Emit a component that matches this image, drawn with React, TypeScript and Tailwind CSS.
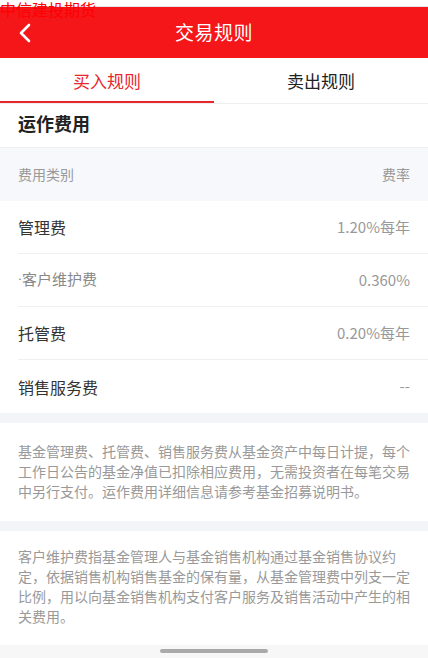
import React from 'react';

const rows = [
  { name: '管理费', rate: '1.20%每年', sub: false },
  { name: '客户维护费', rate: '0.360%', sub: true },
  { name: '托管费', rate: '0.20%每年', sub: false },
  { name: '销售服务费', rate: '--', sub: false },
];

const note1 = [
  '基金管理费、托管费、销售服务费从基金资产中每日计提，每个',
  '工作日公告的基金净值已扣除相应费用，无需投资者在每笔交易',
  '中另行支付。运作费用详细信息请参考基金招募说明书。',
];

const note2 = [
  '客户维护费指基金管理人与基金销售机构通过基金销售协议约',
  '定，依据销售机构销售基金的保有量，从基金管理费中列支一定',
  '比例，用以向基金销售机构支付客户服务及销售活动中产生的相',
  '关费用。',
];

export default function App() {
  return (
    <div className="relative w-[428px] h-[658px] overflow-hidden bg-white font-['Noto_Sans_CJK_SC',sans-serif]">
      {/* page title overlay */}
      <div className="absolute left-0 top-0 z-10 text-[16px] leading-[18px] text-[#ff0000] font-['Noto_Sans_CJK_SC',sans-serif]">
        中信建投期货
      </div>

      <div className="h-[7px] bg-white border-b border-[#e5e5e5]" />

      {/* header */}
      <div className="relative h-[51px] bg-[#f5161a] flex items-center justify-center">
        <svg className="absolute left-[18px] top-[16px]" width="14" height="20" viewBox="0 0 14 20">
          <path d="M11 2 L3 10 L11 18" fill="none" stroke="white" strokeWidth="2.6" strokeLinecap="round" strokeLinejoin="round" />
        </svg>
        <span className="text-white text-[19px] tracking-[0.5px]">交易规则</span>
      </div>

      {/* tabs */}
      <div className="relative flex h-[46px] border-b border-[#eeeeee]">
        <div className="flex-1 flex items-center justify-center text-[17px] text-[#e8262b]">买入规则</div>
        <div className="flex-1 flex items-center justify-center text-[17px] text-[#222]">卖出规则</div>
        <div className="absolute left-0 bottom-0 w-[214px] h-[2px] bg-[#e8262b]" />
      </div>

      {/* section title */}
      <div className="h-[44px] px-[18px] flex items-center border-b border-[#f0f0f0]">
        <span className="text-[18px] font-bold text-[#222] leading-none -mt-[6px]">运作费用</span>
      </div>

      {/* table header */}
      <div className="h-[53px] bg-[#f6f8fb] px-[18px] flex items-center justify-between text-[14px] text-[#999]">
        <span>费用类别</span>
        <span>费率</span>
      </div>

      {/* rows */}
      <div className="pl-[18px]">
        {rows.map((r, i) => (
          <div
            key={r.name}
            className={`h-[53px] pr-[18px] flex items-center justify-between ${i < rows.length - 1 ? 'border-b border-[#f0f0f0]' : ''}`}
          >
            {r.sub ? (
              <span className="text-[15px] text-[#888]">
                <span className="font-['Roboto',sans-serif]">·</span>客户维护费
              </span>
            ) : (
              <span className="text-[16px] text-[#333]">{r.name}</span>
            )}
            <span className="text-[15px] text-[#999]">{r.rate}</span>
          </div>
        ))}
      </div>

      <div className="h-[10px] bg-[#f2f4f7]" />

      <div className="px-[18px] pt-[18px] pb-[20px] text-[14px] leading-[20px] text-[#999]">
        {note1.map((l) => (
          <div key={l} className="whitespace-nowrap">{l}</div>
        ))}
      </div>

      <div className="h-[10px] bg-[#f2f4f7]" />

      <div className="px-[18px] pt-[15px] text-[14px] leading-[20px] text-[#999]">
        {note2.map((l) => (
          <div key={l} className="whitespace-nowrap">{l}</div>
        ))}
      </div>

      {/* home indicator */}
      <div className="absolute left-0 bottom-0 w-full h-[13px] bg-[#f7f7f7] flex justify-center pt-[4px]">
        <div className="w-[108px] h-[4px] rounded-full bg-[#aaaaaa]" />
      </div>
    </div>
  );
}
